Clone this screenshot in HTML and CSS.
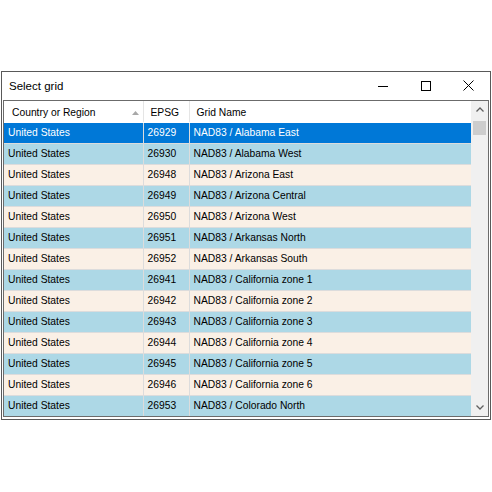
FILE: index.html
```html
<!DOCTYPE html>
<html lang="en">
<head>
    <meta charset="UTF-8">
    <title>Select grid</title>
    <link rel="stylesheet" href="styles.css">
</head>
<body>
    <div class="window">
        <div class="titlebar">
            <span class="title">Select grid</span>
            <div class="caption-buttons">
                <div class="cap-btn">
                    <svg width="10" height="10" viewBox="0 0 10 10"><path d="M0 5.5H10" stroke="#000" stroke-width="1"/></svg>
                </div>
                <div class="cap-btn">
                    <svg width="10" height="10" viewBox="0 0 10 10"><rect x="0.5" y="0.5" width="9" height="9" fill="none" stroke="#000" stroke-width="1"/></svg>
                </div>
                <div class="cap-btn">
                    <svg width="11" height="11" viewBox="0 0 11 11"><path d="M0.5 0.5L10.5 10.5M10.5 0.5L0.5 10.5" stroke="#000" stroke-width="1"/></svg>
                </div>
            </div>
        </div>

        <div class="grid">
            <div class="grid-body">
                <table class="grid-table">
                    <colgroup>
                        <col class="col-country">
                        <col class="col-epsg">
                        <col class="col-name">
                    </colgroup>
                    <thead>
                        <tr>
                            <th class="sorted">Country or Region
                                <svg class="sort-arrow" width="7" height="4" viewBox="0 0 7 4"><path d="M3.5 0L7 4H0Z" fill="#a8a8a8"/></svg>
                            </th>
                            <th>EPSG</th>
                            <th>Grid Name</th>
                        </tr>
                    </thead>
                    <tbody>
                        <tr class="selected"><td>United States</td><td>26929</td><td>NAD83 / Alabama East</td></tr>
                        <tr class="blue"><td>United States</td><td>26930</td><td>NAD83 / Alabama West</td></tr>
                        <tr class="linen"><td>United States</td><td>26948</td><td>NAD83 / Arizona East</td></tr>
                        <tr class="blue"><td>United States</td><td>26949</td><td>NAD83 / Arizona Central</td></tr>
                        <tr class="linen"><td>United States</td><td>26950</td><td>NAD83 / Arizona West</td></tr>
                        <tr class="blue"><td>United States</td><td>26951</td><td>NAD83 / Arkansas North</td></tr>
                        <tr class="linen"><td>United States</td><td>26952</td><td>NAD83 / Arkansas South</td></tr>
                        <tr class="blue"><td>United States</td><td>26941</td><td>NAD83 / California zone 1</td></tr>
                        <tr class="linen"><td>United States</td><td>26942</td><td>NAD83 / California zone 2</td></tr>
                        <tr class="blue"><td>United States</td><td>26943</td><td>NAD83 / California zone 3</td></tr>
                        <tr class="linen"><td>United States</td><td>26944</td><td>NAD83 / California zone 4</td></tr>
                        <tr class="blue"><td>United States</td><td>26945</td><td>NAD83 / California zone 5</td></tr>
                        <tr class="linen"><td>United States</td><td>26946</td><td>NAD83 / California zone 6</td></tr>
                        <tr class="blue"><td>United States</td><td>26953</td><td>NAD83 / Colorado North</td></tr>
                    </tbody>
                </table>
            </div>

            <div class="scrollbar">
                <div class="scroll-btn">
                    <svg width="8" height="5" viewBox="0 0 8 5"><path d="M0.5 4.5L4 1L7.5 4.5" fill="none" stroke="#606060" stroke-width="1.3"/></svg>
                </div>
                <div class="scroll-track">
                    <div class="scroll-thumb"></div>
                </div>
                <div class="scroll-btn">
                    <svg width="8" height="5" viewBox="0 0 8 5"><path d="M0.5 0.5L4 4L7.5 0.5" fill="none" stroke="#606060" stroke-width="1.3"/></svg>
                </div>
            </div>
        </div>
    </div>
</body>
</html>
```

FILE: styles.css
```css
body {
    margin: 0;
    padding-top: 71px;
    background-color: #fff;
    font-family: "Liberation Sans", Arial, sans-serif;
    color: #000;
}

.window {
    box-sizing: border-box;
    width: 490px;
    margin-left: 1px;
    border: 1px solid #595959;
    padding: 0 1px 2px 1px;
    background-color: #fff;
}

.titlebar {
    height: 28px;
    display: flex;
    align-items: center;
    justify-content: space-between;
}

.title {
    font-size: 11.5px;
    padding-left: 6px;
    padding-bottom: 1px;
}

.caption-buttons {
    display: flex;
    height: 100%;
    margin-right: -1px;
}

.cap-btn {
    width: 43px;
    display: flex;
    align-items: center;
    justify-content: center;
    padding-bottom: 1px;
}

.cap-btn svg {
    display: block;
}

.grid {
    display: flex;
    border: 1px solid #6b6b6b;
    height: 315px;
    background-color: #fff;
}

.grid-body {
    width: 467px;
    overflow: hidden;
}

.grid-table {
    border-collapse: collapse;
    table-layout: fixed;
    width: 467px;
    font-size: 10.3px;
}

.col-country {
    width: 139px;
}

.col-epsg {
    width: 46px;
}

.col-name {
    width: 282px;
}

.grid-table th {
    box-sizing: border-box;
    height: 21px;
    padding: 2px 0 0 7px;
    font-weight: normal;
    text-align: left;
    background-color: #fff;
    border-right: 1px solid #e5e5e5;
    border-bottom: 1px solid #fff;
    white-space: nowrap;
    position: relative;
}

.grid-table th.sorted {
    padding-left: 8px;
}

.sort-arrow {
    position: absolute;
    right: 4px;
    top: 10px;
}

.grid-table td {
    box-sizing: border-box;
    height: 21px;
    padding: 0 0 0 4px;
    border-right: 1px solid #dcdcdc;
    border-bottom: 1px solid #dcdcdc;
    white-space: nowrap;
    overflow: hidden;
}

.grid-table tr.blue td {
    background-color: #add8e6;
}

.grid-table tr.linen td {
    background-color: #faf0e6;
}

.grid-table tr.selected td {
    background-color: #0078d7;
    color: #fff;
}

.scrollbar {
    width: 17px;
    display: flex;
    flex-direction: column;
    background-color: #f0f0f0;
}

.scroll-btn {
    height: 17px;
    display: flex;
    align-items: center;
    justify-content: center;
}

.scroll-track {
    flex: 1;
    padding: 3px 2px 0 2px;
}

.scroll-thumb {
    height: 14px;
    background-color: #cdcdcd;
}
```
